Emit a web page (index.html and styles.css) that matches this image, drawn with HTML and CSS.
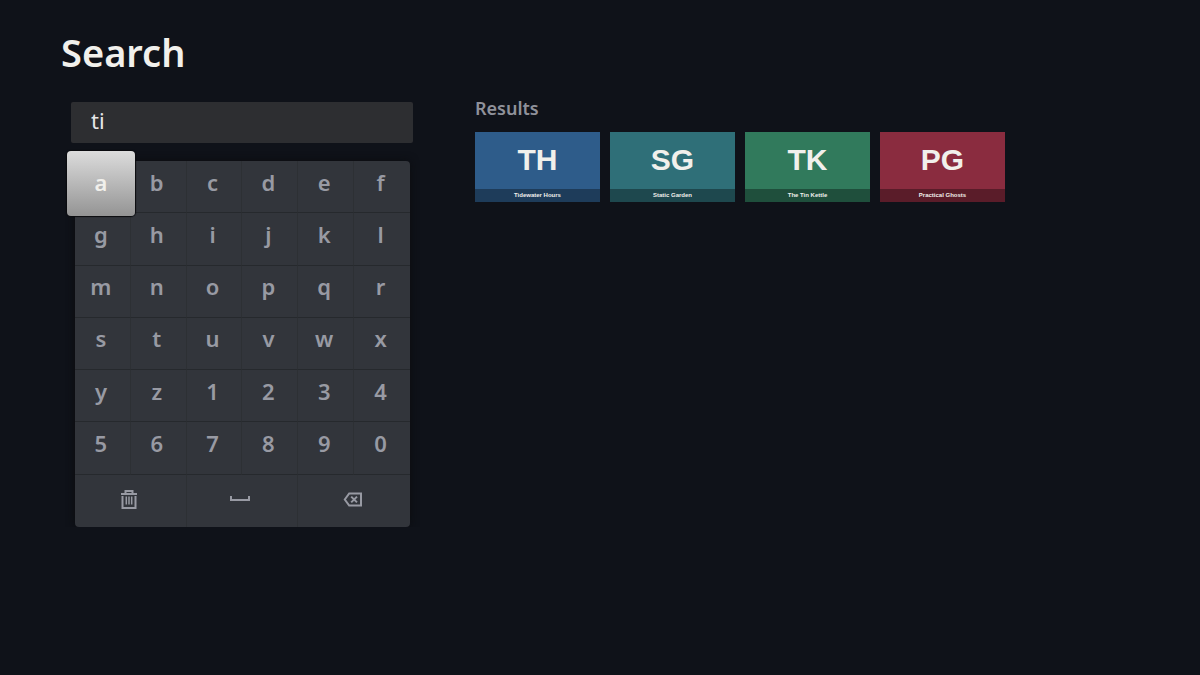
FILE: index.html
```html
<!DOCTYPE html>
<html lang="en">
  <head>
    <meta charset="UTF-8" />
    <meta name="viewport" content="width=device-width, initial-scale=1.0" />
    <title>Search</title>
    <link rel="stylesheet" href="styles.css">
  </head>
  <body>
    <header>
      <h1>Search</h1>
    </header>
    <main>
      <section class="search">
        <input type="text" class="query" value="ti" aria-label="Search" />
        <div class="keyboard">
          <button class="key selected">a</button>
          <button class="key">b</button>
          <button class="key">c</button>
          <button class="key">d</button>
          <button class="key">e</button>
          <button class="key">f</button>
          <button class="key">g</button>
          <button class="key">h</button>
          <button class="key">i</button>
          <button class="key">j</button>
          <button class="key">k</button>
          <button class="key">l</button>
          <button class="key">m</button>
          <button class="key">n</button>
          <button class="key">o</button>
          <button class="key">p</button>
          <button class="key">q</button>
          <button class="key">r</button>
          <button class="key">s</button>
          <button class="key">t</button>
          <button class="key">u</button>
          <button class="key">v</button>
          <button class="key">w</button>
          <button class="key">x</button>
          <button class="key">y</button>
          <button class="key">z</button>
          <button class="key">1</button>
          <button class="key">2</button>
          <button class="key">3</button>
          <button class="key">4</button>
          <button class="key">5</button>
          <button class="key">6</button>
          <button class="key">7</button>
          <button class="key">8</button>
          <button class="key">9</button>
          <button class="key">0</button>
          <button class="key wide" aria-label="Clear">
            <svg width="20" height="22" viewBox="0 0 20 22" fill="none" stroke="currentColor" stroke-width="2">
              <path d="M2 6h16M6.5 6V3h7v3M3.5 8v12h13V8" />
              <path d="M7.3 8.5v8M10 8.5v8M12.7 8.5v8" stroke-width="1.5" />
            </svg>
          </button>
          <button class="key wide" aria-label="Space">
            <svg width="20" height="22" viewBox="0 0 20 22" fill="none" stroke="currentColor" stroke-width="2">
              <path d="M1 8v4h18V8" />
            </svg>
          </button>
          <button class="key wide" aria-label="Delete">
            <svg width="20" height="22" viewBox="0 0 20 22" fill="none" stroke="currentColor" stroke-width="2">
              <path d="M6.2 5.4H18v12.2H6.2L1.8 11.5z" />
              <path d="M8.2 8.6l5.8 5.8M14 8.6l-5.8 5.8" />
            </svg>
          </button>
        </div>
      </section>
      <section class="results">
        <h2>Results</h2>
        <div class="cards">
          <a href="#tidewater-hours" class="card blue">
            <span class="initials">TH</span>
            <span class="name">Tidewater Hours</span>
          </a>
          <a href="#static-garden" class="card teal">
            <span class="initials">SG</span>
            <span class="name">Static Garden</span>
          </a>
          <a href="#the-tin-kettle" class="card green">
            <span class="initials">TK</span>
            <span class="name">The Tin Kettle</span>
          </a>
          <a href="#practical-ghosts" class="card red">
            <span class="initials">PG</span>
            <span class="name">Practical Ghosts</span>
          </a>
        </div>
      </section>
    </main>
  </body>
</html>
```
FILE: styles.css
```css
* {
  box-sizing: border-box;
}
body {
  font-family: "Noto Sans", "Open Sans", sans-serif;
  color: #f1f0ec;
  background-color: #0f1219;
  margin: 0;
  padding: 0;
}
header {
  padding: 24px 61px 0;
}
h1 {
  margin: 0;
  font-size: 38px;
  font-weight: 600;
  line-height: 56px;
}
main {
  display: grid;
  grid-template-columns: 342fr 725fr;
  gap: 62px;
  padding: 22px 0 0 71px;
}
.query {
  display: block;
  width: 100%;
  height: 41px;
  padding: 0 20px 6px;
  border: none;
  border-radius: 2px;
  outline: none;
  background: #2d2e31;
  color: #e6e6e8;
  font-family: inherit;
  font-size: 22px;
}
.keyboard {
  display: grid;
  grid-template-columns: repeat(6, 1fr);
  grid-auto-rows: 1fr;
  height: 366px;
  margin: 18px 3px 0 4px;
  border-radius: 4px;
  background: #32353b;
  box-shadow: 0 0 8px #0b0c0f;
}
.key {
  display: flex;
  justify-content: center;
  align-items: center;
  padding: 0 3px 10px 0;
  border: none;
  border-right: 1px solid #2d3034;
  border-bottom: 1px solid #26292d;
  background: none;
  color: #989aa3;
  font-family: inherit;
  font-size: 22px;
  font-weight: 600;
}
.key:nth-child(6n),
.key:last-child {
  border-right: none;
}
.wide {
  grid-column: span 2;
  padding-bottom: 4px;
  border-bottom: none;
}
/* focused key is bigger than its cell */
.selected {
  z-index: 1;
  margin: -10px -4px -3px -8px;
  padding: 0 0 4px;
  border: none;
  border-radius: 4px;
  background: linear-gradient(#dcdcdc, #949494);
  box-shadow: 0 0 1px 1px #0b0c0f;
  color: #f1f0ec;
}
h2 {
  margin: 0;
  padding-bottom: 12px;
  color: #8f919a;
  font-size: 18px;
  font-weight: 600;
  line-height: 24px;
}
.results {
  margin-top: -6px;
}
.cards {
  display: flex;
  flex-wrap: wrap;
  gap: 10px;
}
.card {
  display: flex;
  flex-direction: column;
  width: 125px;
  color: #f1f0ec;
  font-family: "Liberation Sans", sans-serif;
  font-weight: bold;
  text-align: center;
  text-decoration: none;
}
.initials {
  padding-bottom: 2px;
  font-size: 30px;
  line-height: 55px;
}
.name {
  background: rgba(0, 0, 0, 0.35);
  font-size: 6px;
  line-height: 13px;
}
.blue {
  background: #2e5c8a;
}
.teal {
  background: #2f6f78;
}
.green {
  background: #317a5c;
}
.red {
  background: #8a2c3f;
}
```
